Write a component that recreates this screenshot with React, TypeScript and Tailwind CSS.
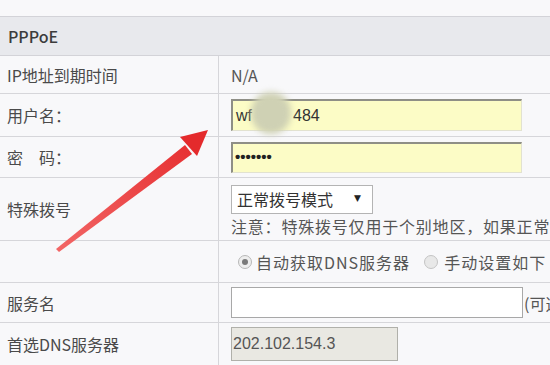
import React from "react";

const font = { fontFamily: '"Microsoft YaHei","Noto Sans CJK SC","Liberation Sans",sans-serif' };

function Row({ h, label, children, last }: { h: string; label?: React.ReactNode; children?: React.ReactNode; last?: boolean }) {
  return (
    <div className={`flex ${h} ${last ? "" : "border-b border-[#d6d6da]"}`}>
      <div className="w-[219px] shrink-0 border-r border-[#d6d6da] flex items-center pl-[7px] text-[16px] text-[#4a4a4a]">
        {label}
      </div>
      <div className="flex-1 flex flex-col justify-center pl-[12px] min-w-0 text-[16px] text-[#4a4a4a] whitespace-nowrap overflow-hidden">
        {children}
      </div>
    </div>
  );
}

export default function App() {
  return (
    <div className="relative w-[550px] h-[365px] overflow-hidden bg-[#f8f8fa]" style={font}>
      <div className="h-[17px] border-b border-[#d3d3d8] bg-[#f8f8fa]" />
      <div className="h-[39px] border-b border-[#d3d3d8] bg-[#e8e9ed] flex items-center pl-[8px] text-[16px] text-[#3c3c3c] font-medium">
        PPPoE
      </div>
      <Row h="h-[38px]" label="IP地址到期时间">
        <span className="text-[#555]">N/A</span>
      </Row>
      <Row h="h-[43px]" label="用户名：">
        <div className="shrink-0 w-[291px] h-[32px] bg-[#fcfcc6] border-t-2 border-l-2 border-[#8e8e86] border-r border-b border-r-[#e2e2d0] border-b-[#e2e2d0] flex items-center pl-[3px] text-[16px] text-[#333]" style={{ fontFamily: '"Liberation Sans",sans-serif' }}>
          <span>wf</span>
          <span className="ml-[41px]">484</span>
        </div>
      </Row>
      <Row h="h-[41px]" label={<span>密<span className="ml-[16px]">码：</span></span>}>
        <div className="shrink-0 w-[291px] h-[31px] bg-[#fcfcc6] border-t-2 border-l-2 border-[#8e8e86] border-r border-b border-r-[#e2e2d0] border-b-[#e2e2d0] flex items-center pl-[2px] text-[15px] font-bold text-[#222]" style={{ fontFamily: '"Liberation Sans",sans-serif' }}>
          •••••••
        </div>
      </Row>
      <Row h="h-[63px]" label="特殊拨号">
        <div className="shrink-0 w-[142px] h-[29px] border border-[#b4b4b4] bg-white flex items-center justify-between pl-[5px] pr-[11px] text-[16px] text-[#333] mt-[3px]">
          <span>正常拨号模式</span>
          <span className="text-[9px] text-[#222]" style={{ fontFamily: '"DejaVu Sans",sans-serif' }}>▼</span>
        </div>
        <div className="text-[16px] text-[#555] leading-[22px] mt-[1px] tracking-[0.8px]">注意：特殊拨号仅用于个别地区，如果正常</div>
      </Row>
      <Row h="h-[42px]">
        <div className="flex items-center text-[16px] text-[#555]">
          <span className="shrink-0 ml-[7px] w-[14px] h-[14px] rounded-full border border-[#b8b8b8] bg-[#eee] flex items-center justify-center">
            <span className="w-[6px] h-[6px] rounded-full bg-[#7a7a7a]" />
          </span>
          <span className="ml-[4px] tracking-[1px]">自动获取DNS服务器</span>
          <span className="shrink-0 ml-[14px] w-[14px] h-[14px] rounded-full border border-[#c4c4c4] bg-[#e8e8e8]" />
          <span className="ml-[6px] tracking-[1px]">手动设置如下</span>
        </div>
      </Row>
      <Row h="h-[40px]" label="服务名">
        <div className="flex items-center">
          <div className="shrink-0 w-[292px] h-[31px] bg-white border border-[#a8a8a8]" />
          <span className="ml-[1px] text-[#555]">(可选</span>
        </div>
      </Row>
      <Row h="h-[42px]" label="首选DNS服务器" last>
        <div className="shrink-0 w-[167px] h-[34px] bg-[#e9e8e2] border border-[#b0b0aa] flex items-center pl-[1px] text-[16px] text-[#555]" style={{ fontFamily: '"Liberation Sans",sans-serif' }}>
          202.102.154.3
        </div>
      </Row>

      {/* blur blob */}
      <div className="absolute left-[251px] top-[92px] w-[40px] h-[42px] rounded-full bg-[#cfd1b4] blur-[3px]" />

      {/* arrow */}
      <svg className="absolute left-0 top-0" width="550" height="365" viewBox="0 0 550 365">
        <defs>
          <linearGradient id="ag" x1="58" y1="250" x2="207" y2="131" gradientUnits="userSpaceOnUse">
            <stop offset="0" stopColor="#f26666" />
            <stop offset="1" stopColor="#e5292b" />
          </linearGradient>
        </defs>
        <polygon points="56,249 185,145 192,154 59,252" fill="url(#ag)" />
        <polygon points="208,130 180,137 197,156" fill="#e42a2c" />
      </svg>
    </div>
  );
}
